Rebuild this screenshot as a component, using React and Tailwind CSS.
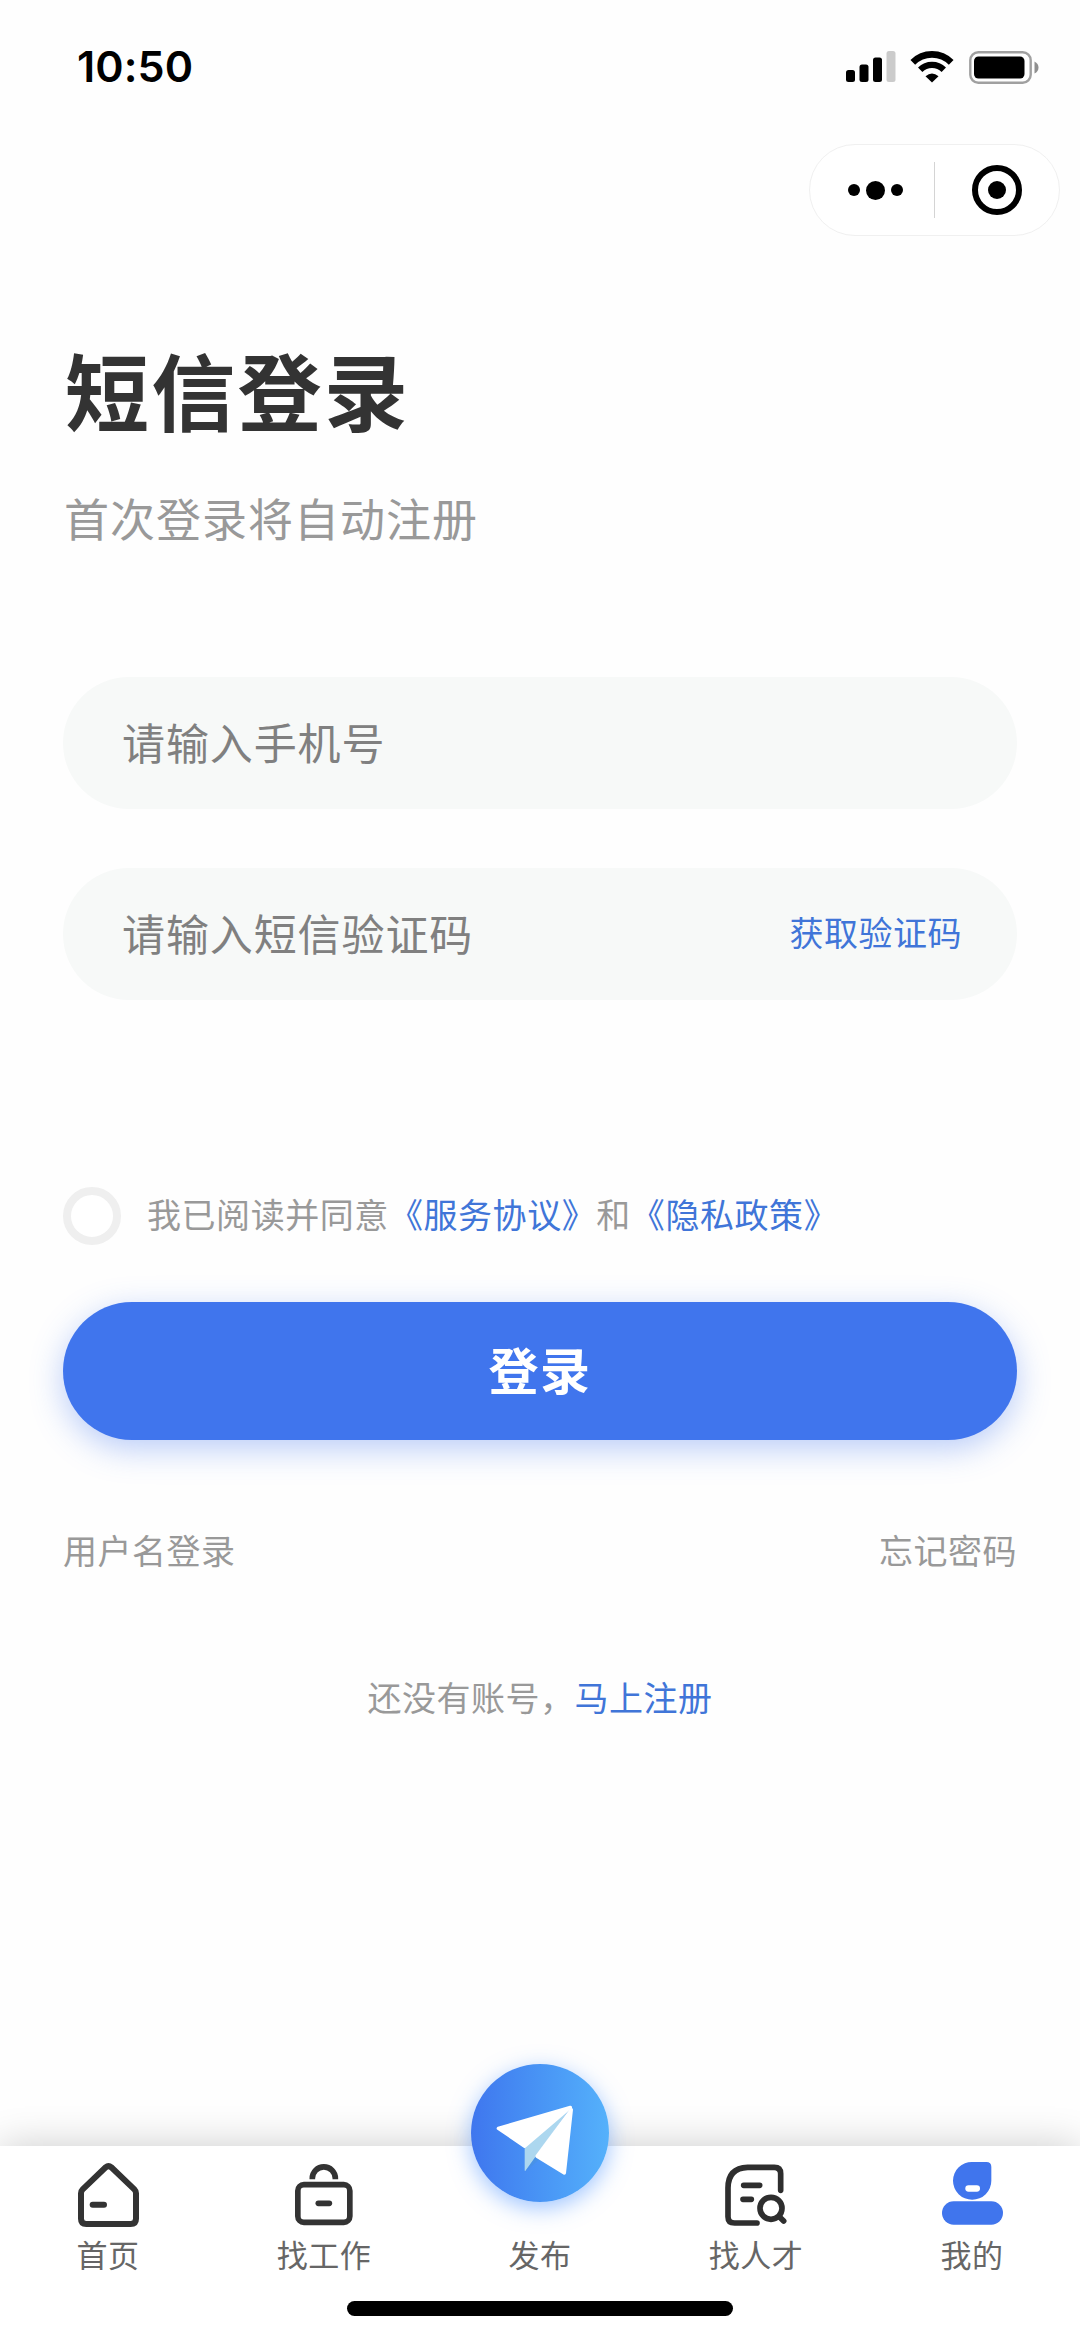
import React, { useState } from 'react';

const HomeIcon = () => (
  <svg className="w-[61px] h-[64px]" viewBox="0 0 183 192" fill="none" stroke="#333" strokeWidth="18" strokeLinecap="round">
    <path d="M9 91Q9 84 14 79L83 13Q91.5 6 100 13L169 79Q174 84 174 91V167Q174 183 158 183H25Q9 183 9 167Z" />
    <path d="M44 125H78" />
  </svg>
);

const JobIcon = () => (
  <svg className="w-[58px] h-[62px]" viewBox="0 0 174 186" fill="none" stroke="#333" strokeWidth="17">
    <rect x="8.5" y="62" width="156" height="113" rx="18" />
    <path d="M52 46V43A34.5 34.5 0 0 1 121 43V46" />
    <path d="M70 118H103" strokeLinecap="round" />
  </svg>
);

const TalentIcon = () => (
  <svg className="w-[62px] h-[62px]" viewBox="0 0 186 186" fill="none" stroke="#2e2e2e" strokeWidth="17" strokeLinecap="round">
    <path d="M167 79V29Q167 10 148 10H68Q9 12 9 72V158Q9 177 29 177H96" />
    <path d="M56 64H104M54 106H79" />
    <circle cx="138" cy="133" r="33" />
    <path d="M163 158L176 171" />
  </svg>
);

const MineIcon = () => (
  <svg className="w-[61px] h-[66px]" viewBox="0 0 183 198" fill="#4075ed">
    <path d="M91 0H133Q148 0 148 15V56A57.5 57.5 0 0 1 33 56A57 56 0 0 1 91 0Z" />
    <rect x="70" y="70" width="44" height="19" rx="9.5" fill="#fff" />
    <rect y="118" width="183" height="70" rx="35" />
  </svg>
);

const PlaneIcon = () => (
  <svg className="w-[138px] h-[138px]" viewBox="0 0 414 414">
    <path d="M161 250L300 129L195 277L163 321Q161 322 161 318Z" fill="#acd7ef" />
    <path d="M195 276L207 284L163 322Z" fill="#4a93dd" opacity="0.6" />
    <g fill="#fff" stroke="#fff" strokeWidth="10" strokeLinejoin="round">
      <path d="M82 193L298 130L161 247Z" />
      <path d="M301 137L280 327L198 277Z" />
    </g>
  </svg>
);

const SignalIcon = () => (
  <svg className="w-[50px] h-[32px]" viewBox="0 0 50 32">
    <rect x="0" y="19" width="9" height="12" rx="2.5" />
    <rect x="13.5" y="13.5" width="9" height="17.5" rx="2.5" />
    <rect x="27" y="6.5" width="9" height="24.5" rx="2.5" />
    <rect x="40.5" y="0" width="9" height="31" rx="2.5" fill="#cbcbcb" />
  </svg>
);

const WifiIcon = () => (
  <svg className="w-[44px] h-[32px]" viewBox="0 0 44 32">
    <path d="M2.8 11.4A27 27 0 0 1 41.2 11.4" fill="none" stroke="#000" strokeWidth="6.6" />
    <path d="M10.2 18.8A16.8 16.8 0 0 1 33.8 18.8" fill="none" stroke="#000" strokeWidth="6.2" />
    <path d="M15.5 25.2Q22 19.6 28.5 25.2L22 31.5Z" />
  </svg>
);

const BatteryIcon = () => (
  <svg className="w-[70px] h-[33px]" viewBox="0 0 70 33">
    <rect x="1.3" y="1.3" width="60.4" height="30.4" rx="8" fill="none" stroke="#a0a0a0" strokeWidth="2.4" />
    <rect x="5" y="5.5" width="50.5" height="22" rx="4.5" />
    <path d="M65.5 10.5Q69.5 12.5 69.5 16.5T65.5 22.5Z" fill="#8f8f8f" />
  </svg>
);

const tabs = [
  { name: '首页', icon: <HomeIcon /> },
  { name: '找工作', icon: <JobIcon /> },
  { name: '发布', icon: null },
  { name: '找人才', icon: <TalentIcon /> },
  { name: '我的', icon: <MineIcon /> },
];

const App = () => {
  const [phone, setPhone] = useState("");
  const [code, setCode] = useState("");
  const [agree, setAgree] = useState(false);

  const handleSubmit = (e) => {
    e.preventDefault();
  };

  return (
    <div className="flex flex-col w-[1080px] h-[2339px] overflow-hidden bg-[#fefefe] font-['Noto_Sans_CJK_SC',sans-serif] text-[34px] tracking-[0.5px] leading-[50px] text-[#999]">
      {/* status bar */}
      <div className="flex items-center justify-between h-[134px] pl-[77px] pr-[41px]">
        <span className="pb-[2px] font-['Inter',sans-serif] font-semibold text-[43px] tracking-[0.1px] text-black">10:50</span>
        <div className="flex items-center">
          <SignalIcon />
          <span className="w-[14px]"></span>
          <WifiIcon />
          <span className="w-[15px]"></span>
          <BatteryIcon />
        </div>
      </div>

      {/* capsule */}
      <div className="flex justify-end pt-[10px] pr-[20px]">
        <div className="flex items-center w-[251px] h-[92px] rounded-full border border-[#f0f0f0] bg-white">
          <div className="flex items-center justify-center gap-[6px] w-[124px] pl-[7px]">
            <span className="size-[12px] rounded-full bg-black"></span>
            <span className="size-[19px] rounded-full bg-black"></span>
            <span className="size-[12px] rounded-full bg-black"></span>
          </div>
          <div className="w-px h-[56px] bg-[#d4d4d4]"></div>
          <div className="flex flex-1 items-center justify-center">
            <span className="flex items-center justify-center size-[50px] rounded-full border-[6px] border-black">
              <span className="size-[18px] rounded-full bg-black"></span>
            </span>
          </div>
        </div>
      </div>

      <form className="flex flex-col px-[63px]" onSubmit={handleSubmit}>
        <h1 className="mt-[93px] ml-[2px] text-[84px] leading-[120px] tracking-[2.3px] font-bold text-[#333]">短信登录</h1>
        <p className="mt-[37px] ml-px text-[45px] leading-[64px] tracking-[1px]">首次登录将自动注册</p>

        <div className="flex items-center mt-[127px] h-[132px] rounded-full bg-[#f7f9f8] px-[59px] pb-[4px]">
          <input
            type="text"
            value={phone}
            onChange={(e) => setPhone(e.target.value)}
            placeholder="请输入手机号"
            className="flex-1 text-[43px] leading-[64px] tracking-[0.9px] text-[#333] placeholder:text-[#808080] outline-none"
          />
        </div>
        <div className="flex items-center mt-[59px] h-[132px] rounded-full bg-[#f7f9f8] pl-[59px] pr-[55px] pb-[5px]">
          <input
            type="text"
            value={code}
            onChange={(e) => setCode(e.target.value)}
            placeholder="请输入短信验证码"
            className="flex-1 min-w-0 text-[43px] leading-[64px] tracking-[0.9px] text-[#333] placeholder:text-[#808080] outline-none"
          />
          <button type="button" className="text-[#4075d8]">获取验证码</button>
        </div>

        <div className="flex items-center mt-[186px] h-[59px]">
          <button
            type="button"
            onClick={() => setAgree(!agree)}
            className={`size-[58px] rounded-full border-8 border-[#efefef] ${agree ? 'bg-[#4075ed]' : 'bg-white'}`}
          ></button>
          <p className="ml-[26px] pb-[4px] whitespace-nowrap tracking-[0.56px]">
            我已阅读并同意<span className="text-[#4075d8]">《服务协议》</span>和<span className="text-[#4075d8]">《隐私政策》</span>
          </p>
        </div>

        <button
          type="submit"
          className="mt-[57px] h-[138px] pb-[7px] rounded-full bg-[#4075ed] text-white text-[50px] tracking-[1.6px] font-bold shadow-[0_9px_32px_rgba(64,117,237,0.36)]"
        >
          登录
        </button>

        <div className="flex justify-between mt-[85px]">
          <span>用户名登录</span>
          <span>忘记密码</span>
        </div>
        <div className="flex justify-center mt-[97px]">
          <span>还没有账号，</span>
          <span className="text-[#4075d8]">马上注册</span>
        </div>
      </form>

      {/* bottom tab bar */}
      <div className="mt-auto h-[193px] bg-white shadow-[0_0_38px_rgba(0,0,0,0.2)]">
        <div className="flex h-[155px]">
          {tabs.map((tab) => (
            <div key={tab.name} className="relative flex flex-col items-center w-[216px]">
              <div className="flex items-center justify-center h-[97px]">{tab.icon}</div>
              {!tab.icon && (
                <div className="absolute top-[-82px] size-[138px] rounded-full bg-linear-to-r from-[#3f76ee] to-[#55b1fb] shadow-[0_6px_22px_rgba(64,140,255,0.5)]">
                  <PlaneIcon />
                </div>
              )}
              <span className="text-[31px] leading-[22px] text-[#666]">{tab.name}</span>
            </div>
          ))}
        </div>
        <div className="mx-auto w-[386px] h-[15px] rounded-full bg-black"></div>
      </div>
    </div>
  );
};

export default App;
